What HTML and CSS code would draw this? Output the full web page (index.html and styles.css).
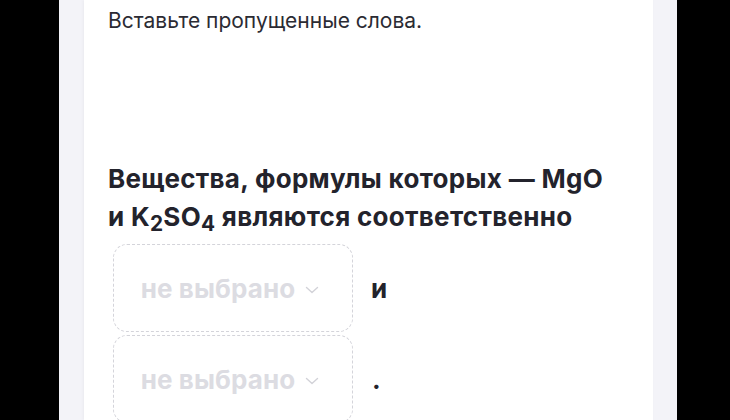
FILE: index.html
```html
<!DOCTYPE html>
<html lang="ru">
<head>
<meta charset="utf-8">
<link rel="stylesheet" href="styles.css">
</head>
<body>
<div class="page">
  <div class="card">
    <p class="hint">Вставьте пропущенные слова.</p>
    <h2 class="question">Вещества, формулы которых — MgO и K<sub>2</sub>SO<sub>4</sub> являются соответственно</h2>
    <div class="row">
      <div class="select"><span>не выбрано</span><svg class="chev" viewBox="0 0 14 8" width="14" height="8"><path d="M1.5 1.5 L7 6.5 L12.5 1.5" fill="none" stroke="#d2d2d8" stroke-width="1.4" stroke-linecap="round" stroke-linejoin="round"/></svg></div>
      <span class="word">и</span>
    </div>
    <div class="row">
      <div class="select"><span>не выбрано</span><svg class="chev" viewBox="0 0 14 8" width="14" height="8"><path d="M1.5 1.5 L7 6.5 L12.5 1.5" fill="none" stroke="#d2d2d8" stroke-width="1.4" stroke-linecap="round" stroke-linejoin="round"/></svg></div>
      <span class="word dot">.</span>
    </div>
  </div>
</div>
</body>
</html>
```
FILE: styles.css
```css
html, body {
  margin: 0;
  height: 100%;
}
body {
  background: #000;
  font-family: Inter, "Noto Sans", sans-serif;
  overflow: hidden;
}
.page {
  width: 618px;
  margin-left: 59px;
  height: 100%;
  background: #f3f3f8;
  padding: 0 24px 0 25px;
  box-sizing: border-box;
}
.card {
  background: #fff;
  height: 100%;
  padding: 0 24px;
  box-shadow: -1px 0 3px rgba(0,0,0,0.04);
}
.hint {
  margin: 0;
  padding-top: 7px;
  font-size: 21px;
  line-height: 28px;
  color: #2b2b33;
}
.question {
  margin: 0;
  max-width: 505px;
  padding-top: 125px;
  font-size: 26px;
  line-height: 38px;
  font-weight: 700;
  color: #23232c;
  letter-spacing: 0.3px;
}
.question sub {
  font-size: 0.8em;
  line-height: 1;
  vertical-align: -0.25em;
}
.row {
  display: flex;
  align-items: center;
  gap: 18px;
  margin-left: 5px;
}
.question + .row {
  margin-top: 8px;
}
.row + .row {
  margin-top: 3px;
}
.select {
  width: 240px;
  height: 88px;
  box-sizing: border-box;
  border: 1px dashed #d4d4da;
  border-radius: 14px;
  display: flex;
  align-items: center;
  justify-content: center;
  gap: 10px;
  padding-right: 6px;
  font-size: 26px;
  font-weight: 700;
  color: #dcdce2;
  letter-spacing: 0.1px;
}
.chev {
  margin-top: 3px;
}
.word {
  font-size: 26px;
  font-weight: 700;
  color: #23232c;
}
.dot {
  margin-top: 0;
  margin-left: 1px;
}
```
